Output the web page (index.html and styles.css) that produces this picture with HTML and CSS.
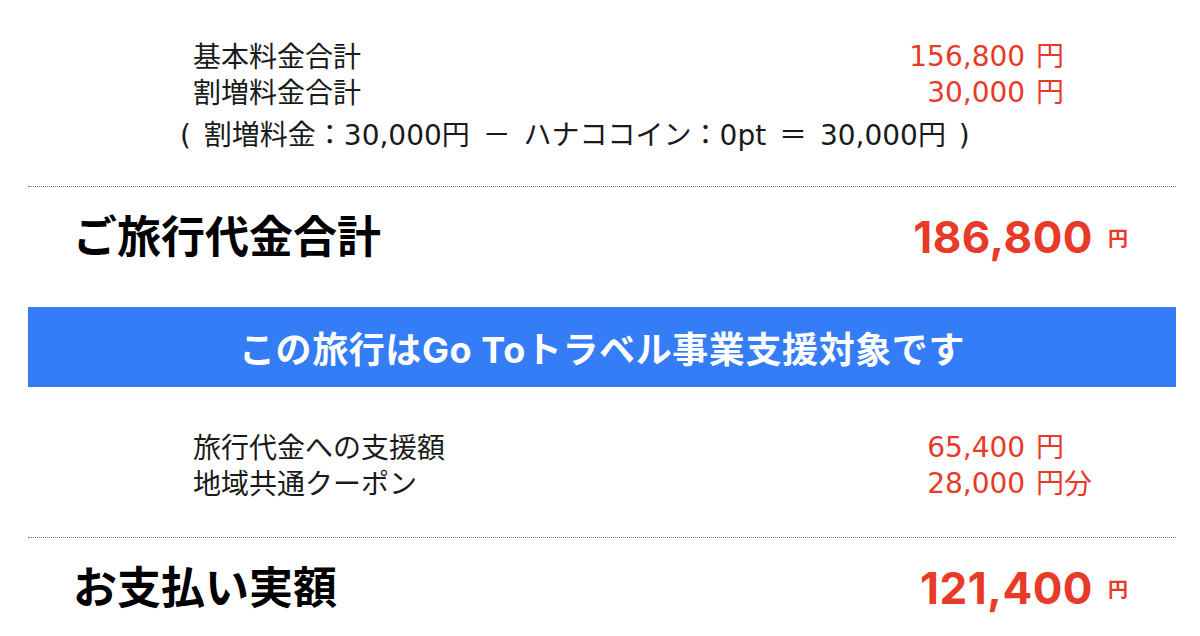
FILE: index.html
```
<!DOCTYPE html>
<html lang="ja">
<head>
<meta charset="utf-8">
<title>ご旅行代金</title>
<link rel="stylesheet" href="styles.css">
</head>
<body>
<div class="page">
  <section class="details details-top">
    <div class="row"><span class="label">基本料金合計</span><span class="amount">156,800 円</span><span class="suffix"></span></div>
    <div class="row"><span class="label">割増料金合計</span><span class="amount">30,000 円</span><span class="suffix"></span></div>
    <p class="note">( 割増料金：30,000円 － ハナココイン：0pt ＝ 30,000円 )</p>
  </section>
  <div class="total">
    <span class="total-label">ご旅行代金合計</span>
    <span class="total-value"><span class="num">186,800</span><span class="yen">円</span></span>
  </div>
  <div class="banner">この旅行はGo Toトラベル事業支援対象です</div>
  <section class="details details-support">
    <div class="row"><span class="label">旅行代金への支援額</span><span class="amount">65,400 円</span><span class="suffix"></span></div>
    <div class="row"><span class="label">地域共通クーポン</span><span class="amount">28,000 円</span><span class="suffix">分</span></div>
  </section>
  <div class="total">
    <span class="total-label">お支払い実額</span>
    <span class="total-value"><span class="num">121,400</span><span class="yen">円</span></span>
  </div>
</div>
</body>
</html>
```
FILE: styles.css
```
html, body {
  margin: 0;
  padding: 0;
  background: #ffffff;
}

body {
  font-family: "Inter", "Noto Sans CJK JP", sans-serif;
  color: #1a1a1a;
  overflow: hidden;
}

.page {
  padding: 0 24px 0 28px;
}

.details {
  padding-left: 165px;
  padding-right: 84px;
  font-size: 28px;
  line-height: 36px;
}

.details-top {
  padding-top: 39px;
  padding-bottom: 32px;
}

.details-support {
  padding-top: 43px;
  padding-bottom: 35px;
}

.row {
  display: grid;
  grid-template-columns: 1fr auto 28px;
}

.amount,
.suffix {
  color: #e83a28;
  white-space: nowrap;
}

.amount {
  font-family: "DejaVu Sans", "Noto Sans CJK JP", sans-serif;
  text-align: right;
  word-spacing: 2px;
}

.note {
  font-family: "DejaVu Sans", "Noto Sans CJK JP", sans-serif;
  margin: 7px 0 0 -13px;
  white-space: nowrap;
  word-spacing: 4px;
}

.total {
  display: flex;
  align-items: center;
  justify-content: space-between;
  border-top: 1px dotted #7a7a7a;
  padding: 20px 48px 40px 45px;
}

.total-label {
  font-size: 44px;
  line-height: 60px;
  font-weight: 700;
  color: #000;
}

.total-value {
  display: flex;
  align-items: center;
  color: #e83a28;
  font-weight: 700;
}

.num {
  font-size: 44px;
  line-height: 60px;
  letter-spacing: 0.5px;
}

.yen {
  font-size: 20px;
  margin-left: 15px;
}

.banner {
  height: 80px;
  display: flex;
  align-items: center;
  justify-content: center;
  background: #357cf7;
  color: #ffffff;
  font-size: 36px;
  font-weight: 700;
  letter-spacing: 0.6px;
}
```
